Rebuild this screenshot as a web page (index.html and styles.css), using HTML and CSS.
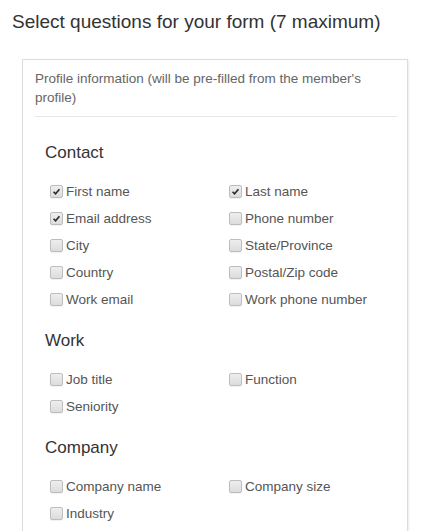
FILE: index.html
```html
<!DOCTYPE html>
<html>
<head>
<meta charset="utf-8">
<link rel="stylesheet" href="styles.css">
</head>
<body>
<div class="page">
  <h1 class="title">Select questions for your form (7 maximum)</h1>
  <div class="card">
    <p class="intro">Profile information (will be pre-filled from the member's profile)</p>
    <hr class="divider">
    <div class="sections">
      <section class="group">
        <h2 class="group-title">Contact</h2>
        <div class="grid">
          <label class="item"><span class="box checked"><svg viewBox="0 0 13 13"><path d="M3 6.8 L5.4 9.2 L10 3.8" fill="none" stroke="#2a2a2a" stroke-width="1.9"/></svg></span>First name</label>
          <label class="item"><span class="box checked"><svg viewBox="0 0 13 13"><path d="M3 6.8 L5.4 9.2 L10 3.8" fill="none" stroke="#2a2a2a" stroke-width="1.9"/></svg></span>Last name</label>
          <label class="item"><span class="box checked"><svg viewBox="0 0 13 13"><path d="M3 6.8 L5.4 9.2 L10 3.8" fill="none" stroke="#2a2a2a" stroke-width="1.9"/></svg></span>Email address</label>
          <label class="item"><span class="box"></span>Phone number</label>
          <label class="item"><span class="box"></span>City</label>
          <label class="item"><span class="box"></span>State/Province</label>
          <label class="item"><span class="box"></span>Country</label>
          <label class="item"><span class="box"></span>Postal/Zip code</label>
          <label class="item"><span class="box"></span>Work email</label>
          <label class="item"><span class="box"></span>Work phone number</label>
        </div>
      </section>
      <section class="group">
        <h2 class="group-title">Work</h2>
        <div class="grid">
          <label class="item"><span class="box"></span>Job title</label>
          <label class="item"><span class="box"></span>Function</label>
          <label class="item"><span class="box"></span>Seniority</label>
        </div>
      </section>
      <section class="group">
        <h2 class="group-title">Company</h2>
        <div class="grid">
          <label class="item"><span class="box"></span>Company name</label>
          <label class="item"><span class="box"></span>Company size</label>
          <label class="item"><span class="box"></span>Industry</label>
        </div>
      </section>
    </div>
  </div>
</div>
</body>
</html>
```
FILE: styles.css
```css
html, body {
  margin: 0;
  padding: 0;
  background: #fff;
}
body {
  font-family: "Liberation Sans", Arial, sans-serif;
}
.page {
  padding: 11px 0 0 12px;
}
.title {
  margin: 0 0 26px 0;
  font-size: 19px;
  line-height: 22px;
  font-weight: normal;
  color: #333;
}
.card {
  box-sizing: border-box;
  width: 386px;
  margin-left: 10px;
  border: 1px solid #dcdcdc;
  box-shadow: 1px 1px 2px rgba(0,0,0,0.08);
  padding: 9px 10px 20px 12px;
}
.intro {
  margin: 0;
  font-size: 13.5px;
  line-height: 19px;
  color: #666;
}
.divider {
  margin: 9px 0 0 0;
  border: 0;
  border-top: 1px solid #e6e6e6;
  height: 0;
}
.sections {
  padding: 24px 0 0 10px;
}
.group + .group {
  margin-top: 16px;
}
.group-title {
  margin: 0 0 13px 0;
  font-size: 17px;
  line-height: 24px;
  font-weight: normal;
  color: #333;
}
.grid {
  display: grid;
  grid-template-columns: 179px 1fr;
  grid-auto-rows: 27px;
}
.item {
  display: flex;
  align-items: center;
  gap: 3px;
  padding-left: 5px;
  font-size: 13.5px;
  color: #555;
}
.box {
  box-sizing: border-box;
  width: 13px;
  height: 13px;
  border: 1px solid #bdbdbd;
  border-radius: 2px;
  background: linear-gradient(#eeeeee, #dcdcdc);
  box-shadow: 0 1px 1px rgba(0,0,0,0.06);
  display: inline-flex;
  flex: none;
}
.box svg {
  width: 11px;
  height: 11px;
}
```
